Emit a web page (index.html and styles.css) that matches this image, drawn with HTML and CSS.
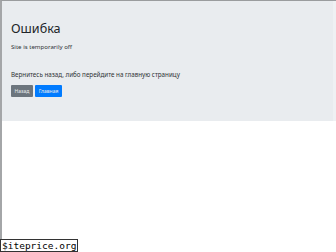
FILE: index.html
```
<!doctype html>
<html>
	<head>
		<title>Ошибка</title>
		<meta charset="utf-8" />
		<link rel="stylesheet" href="styles.css">
	</head>
	<body>
		<div class="page">
			<div class="jumbotron">
				<h1>Ошибка</h1>
				<p class="lead">Site is temporarily off</p>
				<p class="hint">Вернитесь назад, либо перейдите на главную страницу</p>
				<div class="actions">
					<a class="btn btn-back" href="#">Назад</a>
					<a class="btn btn-home" href="#">Главная</a>
				</div>
			</div>
		</div>
		<div class="stamp">$iteprice.org</div>
	</body>
</html>
```
FILE: styles.css
```
* { margin: 0; padding: 0; box-sizing: border-box; }
html, body { height: 100%; }
body { font-family: "Noto Sans", "Open Sans", sans-serif; color: #2f3336; background: #fff; overflow: hidden; }
.page { height: 100%; border-top: 1px solid #9a9c9e; border-left: 2px solid #a4a6a8; }
.jumbotron { background: #e9ecef; height: 120px; padding: 19px 0 0 9px; border-right: 3px solid #eff1f3; }
h1 { font-size: 12.6px; line-height: 18px; font-weight: 400; color: #212529; }
.lead { font-size: 6.1px; line-height: 9px; margin-top: 4px; }
.hint { font-size: 6.25px; line-height: 9px; margin-top: 19px; }
.actions { display: flex; gap: 2px; margin-top: 6px; }
.btn { display: block; height: 12px; line-height: 12px; font-size: 5px; color: #e8eaec; text-decoration: none; text-align: center; border-radius: 1px; }
.btn-back { width: 22px; background: #6c757d; }
.btn-home { width: 27px; background: #007bff; }
.stamp { position: absolute; left: 0; bottom: 0; height: 13px; padding: 0 1px; font-family: "DejaVu Sans Mono", monospace; font-size: 9.5px; line-height: 11px; color: #000; background: #fff; border: 1px solid #333; }
```
